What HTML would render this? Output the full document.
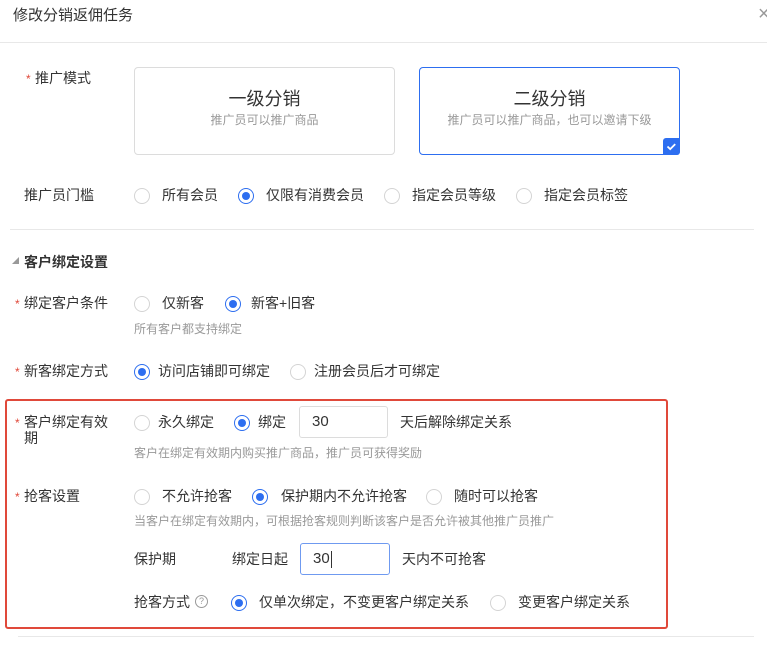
<!DOCTYPE html>
<html><head><meta charset="utf-8"><style>
*{margin:0;padding:0;box-sizing:border-box}
body{width:767px;height:650px;background:#fff;position:relative;overflow:hidden;font-family:"Liberation Sans","Noto Sans CJK SC",sans-serif;font-size:14px;color:#333}
.a{position:absolute;white-space:nowrap;line-height:20px}
.g{color:#999;font-size:12px}
.r{position:absolute;width:16px;height:16px;border:1px solid #d4d4d4;border-radius:50%;background:#fff}
.r.on{border-color:#2d6ef0}
.r.on::after{content:"";position:absolute;left:3px;top:3px;width:8px;height:8px;border-radius:50%;background:#2d6ef0}
.s{position:absolute;color:#e0493a;font-size:12px;line-height:20px}
.inp{position:absolute;border:1px solid #dcdcdc;border-radius:3px;height:32px;padding-left:12px;line-height:30px;font-size:15px;color:#333}
</style></head><body>
<div class="a" style="left:13px;top:6px;font-size:15px;color:#333">修改分销返佣任务</div>
<div class="a" style="left:758px;top:4px;font-size:20px;color:#999">×</div>
<div style="position:absolute;left:0;top:42px;width:767px;height:1px;background:#e8e8e8"></div>

<span class="s" style="left:26px;top:69px">*</span><div class="a" style="left:35px;top:68px">推广模式</div>
<div style="position:absolute;left:134px;top:67px;width:261px;height:88px;border:1px solid #dcdcdc;border-radius:4px;text-align:center">
<div style="margin-top:19px;font-size:18px;line-height:24px;color:#333">一级分销</div>
<div style="margin-top:1px;font-size:12px;color:#999;line-height:16px">推广员可以推广商品</div></div>
<div style="position:absolute;left:419px;top:67px;width:261px;height:88px;border:1px solid #2d6ef0;border-radius:4px;text-align:center">
<div style="margin-top:19px;font-size:18px;line-height:24px;color:#333">二级分销</div>
<div style="margin-top:1px;font-size:12px;color:#999;line-height:16px">推广员可以推广商品，也可以邀请下级</div>
<div style="position:absolute;right:-1px;bottom:-1px;width:17px;height:17px;background:#2d6ef0;border-radius:3px 0 3px 0"><svg width="17" height="17" viewBox="0 0 17 17"><path d="M4.5 8.5l2.7 2.6 5-5" stroke="#fff" stroke-width="1.8" fill="none"/></svg></div></div>

<div class="a" style="left:24px;top:185px">推广员门槛</div>
<div class="r" style="left:134px;top:188px"></div><div class="a" style="left:162px;top:185px">所有会员</div>
<div class="r on" style="left:238px;top:188px"></div><div class="a" style="left:266px;top:185px">仅限有消费会员</div>
<div class="r" style="left:384px;top:188px"></div><div class="a" style="left:412px;top:185px">指定会员等级</div>
<div class="r" style="left:516px;top:188px"></div><div class="a" style="left:544px;top:185px">指定会员标签</div>
<div style="position:absolute;left:10px;top:229px;width:744px;height:1px;background:#e8e8e8"></div>

<div class="a" style="left:12px;top:252px;font-size:7px;color:#999">◢</div>
<div class="a" style="left:24px;top:252px;font-weight:bold;font-size:14px">客户绑定设置</div>

<span class="s" style="left:15px;top:294px">*</span><div class="a" style="left:24px;top:293px">绑定客户条件</div>
<div class="r" style="left:134px;top:296px"></div><div class="a" style="left:162px;top:293px">仅新客</div>
<div class="r on" style="left:225px;top:296px"></div><div class="a" style="left:251px;top:293px">新客+旧客</div>
<div class="a g" style="left:134px;top:319px">所有客户都支持绑定</div>

<span class="s" style="left:15px;top:362px">*</span><div class="a" style="left:24px;top:361px">新客绑定方式</div>
<div class="r on" style="left:134px;top:364px"></div><div class="a" style="left:158px;top:361px">访问店铺即可绑定</div>
<div class="r" style="left:290px;top:364px"></div><div class="a" style="left:314px;top:361px">注册会员后才可绑定</div>

<div style="position:absolute;left:5px;top:399px;width:663px;height:230px;border:2px solid #e0493a;border-radius:3px"></div>
<span class="s" style="left:15px;top:413px">*</span><div class="a" style="left:24px;top:412px">客户绑定有效</div><div class="a" style="left:24px;top:428px">期</div>
<div class="r" style="left:134px;top:415px"></div><div class="a" style="left:158px;top:412px">永久绑定</div>
<div class="r on" style="left:234px;top:415px"></div><div class="a" style="left:258px;top:412px">绑定</div>
<div class="inp" style="left:299px;top:406px;width:89px">30</div>
<div class="a" style="left:400px;top:412px">天后解除绑定关系</div>
<div class="a g" style="left:134px;top:443px">客户在绑定有效期内购买推广商品，推广员可获得奖励</div>

<span class="s" style="left:15px;top:487px">*</span><div class="a" style="left:24px;top:486px">抢客设置</div>
<div class="r" style="left:134px;top:489px"></div><div class="a" style="left:162px;top:486px">不允许抢客</div>
<div class="r on" style="left:252px;top:489px"></div><div class="a" style="left:281px;top:486px">保护期内不允许抢客</div>
<div class="r" style="left:426px;top:489px"></div><div class="a" style="left:454px;top:486px">随时可以抢客</div>
<div class="a g" style="left:134px;top:511px">当客户在绑定有效期内，可根据抢客规则判断该客户是否允许被其他推广员推广</div>

<div class="a" style="left:134px;top:549px">保护期</div>
<div class="a" style="left:232px;top:549px">绑定日起</div>
<div class="inp" style="left:300px;top:543px;width:90px;border-color:#6f9af0">30<span style="display:inline-block;width:1px;height:17px;background:#333;vertical-align:middle;margin-left:1px"></span></div>
<div class="a" style="left:402px;top:549px">天内不可抢客</div>

<div class="a" style="left:134px;top:592px">抢客方式</div>
<div style="position:absolute;left:195px;top:595px;width:13px;height:13px;border:1px solid #999;border-radius:50%;font-size:9px;line-height:11px;text-align:center;color:#999">?</div>
<div class="r on" style="left:231px;top:595px"></div><div class="a" style="left:259px;top:592px">仅单次绑定，不变更客户绑定关系</div>
<div class="r" style="left:490px;top:595px"></div><div class="a" style="left:518px;top:592px">变更客户绑定关系</div>
<div style="position:absolute;left:18px;top:636px;width:736px;height:1px;background:#e8e8e8"></div>
</body></html>
